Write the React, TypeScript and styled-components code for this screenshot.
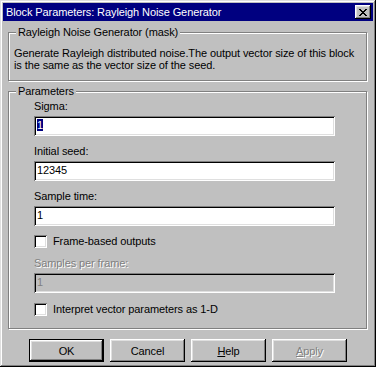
import styled, { createGlobalStyle } from "styled-components";

const GlobalStyle = createGlobalStyle`
  html, body {
    margin: 0;
    padding: 0;
    background: #c0c0c0;
  }
  * {
    box-sizing: border-box;
  }
`;

const Window = styled.div`
  width: 376px;
  height: 367px;
  padding: 3px;
  background: #c0c0c0;
  display: flex;
  flex-direction: column;
  font-family: "Liberation Sans", Arial, sans-serif;
  font-size: 11px;
  letter-spacing: -0.1px;
  color: #000;
  box-shadow: inset -1px -1px 0 #000, inset 1px 1px 0 #dfdfdf,
    inset -2px -2px 0 #808080, inset 2px 2px 0 #fff;
`;

const TitleBar = styled.div`
  height: 18px;
  background: #000080;
  color: #fff;
  display: flex;
  align-items: center;
  justify-content: space-between;
  padding: 0 2px 0 3px;
  font-size: 11px;
  letter-spacing: -0.1px;
`;

const CloseButton = styled.button`
  width: 16px;
  height: 14px;
  padding: 0;
  border: none;
  background: #c0c0c0;
  display: flex;
  align-items: center;
  justify-content: center;
  box-shadow: inset -1px -1px 0 #000, inset 1px 1px 0 #fff,
    inset -2px -2px 0 #808080, inset 2px 2px 0 #dfdfdf;
`;

const Body = styled.div`
  flex: 1;
  display: flex;
  flex-direction: column;
  padding: 5px 6px 0 5px;
`;

const GroupBox = styled.fieldset<{ $top?: number }>`
  margin: ${(p) => p.$top ?? 0}px 0 0 0;
  border: 1px solid #808080;
  box-shadow: 1px 1px 0 #fff, inset 1px 1px 0 #fff;
  padding: 0;
  min-width: 0;
`;

const Legend = styled.legend`
  margin-left: 7px;
  padding: 0 2px 0 2px;
  line-height: 13px;
  background: #c0c0c0;
`;

const Description = styled.p`
  margin: 0;
  padding: 8px 5px 9px 5px;
  line-height: 12px;
`;

const ParamList = styled.div`
  display: flex;
  flex-direction: column;
  padding: 2px 0 12px 25px;
`;

const Label = styled.div<{ $disabled?: boolean; $gap?: number }>`
  line-height: 13px;
  margin-top: ${(p) => p.$gap ?? 0}px;
  margin-bottom: 3px;
  color: ${(p) => (p.$disabled ? "#808080" : "#000")};
  text-shadow: ${(p) => (p.$disabled ? "1px 1px 0 #fff" : "none")};
`;

const TextField = styled.div<{ $disabled?: boolean }>`
  width: 301px;
  height: 20px;
  flex-shrink: 0;
  padding: 3px 3px 0 3px;
  line-height: 13px;
  background: ${(p) => (p.$disabled ? "#c0c0c0" : "#fff")};
  color: ${(p) => (p.$disabled ? "#808080" : "#000")};
  box-shadow: inset 1px 1px 0 #808080, inset -1px -1px 0 #fff,
    inset 2px 2px 0 #000, inset -2px -2px 0 #dfdfdf;
`;

const Selected = styled.span`
  background: #000080;
  color: #fff;
`;

const CheckRow = styled.label<{ $gap?: number }>`
  display: flex;
  align-items: center;
  gap: 6px;
  margin-top: ${(p) => p.$gap ?? 0}px;
  line-height: 13px;
`;

const CheckBox = styled.span`
  width: 13px;
  height: 13px;
  flex-shrink: 0;
  background: #fff;
  box-shadow: inset 1px 1px 0 #808080, inset -1px -1px 0 #fff,
    inset 2px 2px 0 #000, inset -2px -2px 0 #dfdfdf;
`;

const ButtonRow = styled.div`
  display: flex;
  gap: 6px;
  padding: 10px 0 0 21px;
`;

const Button = styled.button<{ $default?: boolean; $disabled?: boolean }>`
  width: 75px;
  height: 23px;
  padding: 0;
  border: ${(p) => (p.$default ? "1px solid #000" : "none")};
  background: #c0c0c0;
  font-family: inherit;
  font-size: 11px;
  letter-spacing: -0.1px;
  color: ${(p) => (p.$disabled ? "#808080" : "#000")};
  text-shadow: ${(p) => (p.$disabled ? "1px 1px 0 #fff" : "none")};
  box-shadow: inset -1px -1px 0 #000, inset 1px 1px 0 #fff,
    inset -2px -2px 0 #808080, inset 2px 2px 0 #dfdfdf;
  u {
    text-decoration: underline;
  }
`;

const CloseGlyph = () => (
  <svg width="8" height="7" viewBox="0 0 8 7" shapeRendering="crispEdges">
    <path
      d="M0 0h2v1H0zM6 0h2v1H6zM1 1h2v1H1zM5 1h2v1H5zM2 2h4v1H2zM3 3h2v1H3zM2 4h4v1H2zM1 5h2v1H1zM5 5h2v1H5zM0 6h2v1H0zM6 6h2v1H6z"
      fill="#000"
    />
  </svg>
);

export default function App() {
  return (
    <>
      <GlobalStyle />
      <Window>
        <TitleBar>
          <span>Block Parameters: Rayleigh Noise Generator</span>
          <CloseButton>
            <CloseGlyph />
          </CloseButton>
        </TitleBar>
        <Body>
          <GroupBox>
            <Legend>Rayleigh Noise Generator (mask)</Legend>
            <Description>
              Generate Rayleigh distributed noise.The output vector size of this block
              <br />
              is the same as the vector size of the seed.
            </Description>
          </GroupBox>
          <GroupBox $top={4}>
            <Legend>Parameters</Legend>
            <ParamList>
              <Label>Sigma:</Label>
              <TextField>
                <Selected>1</Selected>
              </TextField>
              <Label $gap={9}>Initial seed:</Label>
              <TextField>12345</TextField>
              <Label $gap={9}>Sample time:</Label>
              <TextField>1</TextField>
              <CheckRow $gap={9}>
                <CheckBox />
                Frame-based outputs
              </CheckRow>
              <Label $gap={9} $disabled>
                Samples per frame:
              </Label>
              <TextField $disabled>1</TextField>
              <CheckRow $gap={10}>
                <CheckBox />
                Interpret vector parameters as 1-D
              </CheckRow>
            </ParamList>
          </GroupBox>
          <ButtonRow>
            <Button $default>OK</Button>
            <Button>Cancel</Button>
            <Button>
              <u>H</u>elp
            </Button>
            <Button $disabled>
              <u>A</u>pply
            </Button>
          </ButtonRow>
        </Body>
      </Window>
    </>
  );
}
